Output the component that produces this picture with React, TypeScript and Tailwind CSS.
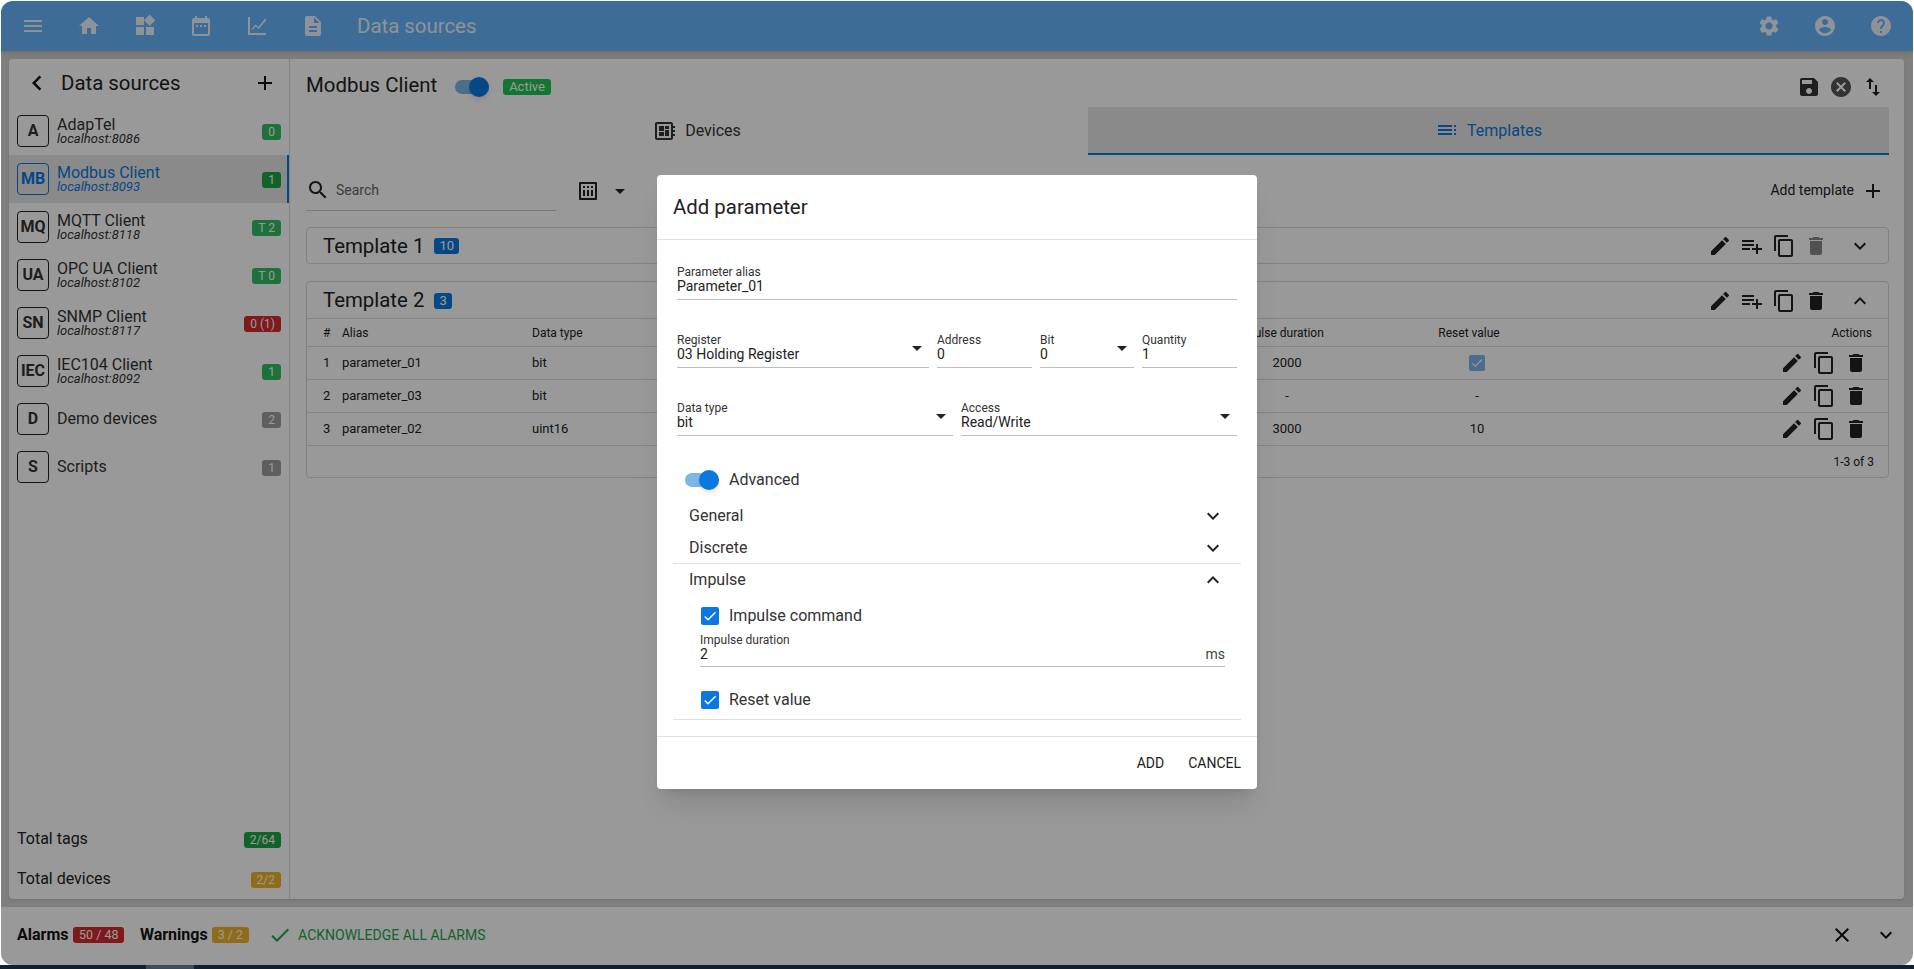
import React from "react";

const P: Record<string, string> = {
  menu: "M3 18h18v-2H3v2zm0-5h18v-2H3v2zm0-7v2h18V6H3z",
  home: "M10 20v-6h4v6h5v-8h3L12 3 2 12h3v8z",
  widgets: "M13 13v8h8v-8h-8zM3 21h8v-8H3v8zM3 3v8h8V3H3zm13.66-2.34L11 6.34 16.66 12l5.66-5.66-5.66-5.66z",
  date: "M9 11H7v2h2v-2zm4 0h-2v2h2v-2zm4 0h-2v2h2v-2zm2-7h-1V2h-2v2H8V2H6v2H5c-1.11 0-1.99.9-1.99 2L3 20c0 1.1.89 2 2 2h14c1.1 0 2-.9 2-2V6c0-1.1-.9-2-2-2zm0 16H5V9h14v11z",
  chart: "M3 3h2v16h16v2H3V3zm3.4 12.6 4.1-5.2 3 2.7L20 4.4l1.5 1.3-7.8 9.2-3-2.7-2.8 3.6-1.5-.2z",
  doc: "M14 2H6c-1.1 0-1.99.9-1.99 2L4 20c0 1.1.89 2 2 2h12c1.1 0 2-.9 2-2V8l-6-6zm2 16H8v-2h8v2zm0-4H8v-2h8v2zm-3-5V3.5L18.5 9H13z",
  settings:
    "M19.14 12.94c.04-.3.06-.61.06-.94 0-.32-.02-.64-.07-.94l2.03-1.58c.18-.14.23-.41.12-.61l-1.92-3.32c-.12-.22-.37-.29-.59-.22l-2.39.96c-.5-.38-1.03-.7-1.62-.94L14.4 2.81c-.04-.24-.24-.41-.48-.41h-3.84c-.24 0-.43.17-.47.41L9.25 5.35c-.59.24-1.13.57-1.62.94l-2.39-.96c-.22-.08-.47 0-.59.22L2.74 8.87c-.12.21-.08.47.12.61l2.03 1.58c-.05.3-.09.63-.09.94s.02.64.07.94l-2.03 1.58c-.18.14-.23.41-.12.61l1.92 3.32c.12.22.37.29.59.22l2.39-.96c.5.38 1.03.7 1.62.94l.36 2.54c.05.24.24.41.48.41h3.84c.24 0 .44-.17.47-.41l.36-2.54c.59-.24 1.13-.56 1.62-.94l2.39.96c.22.08.47 0 .59-.22l1.92-3.32c.12-.22.07-.47-.12-.61l-2.01-1.58zM12 15.6c-1.98 0-3.6-1.62-3.6-3.6s1.62-3.6 3.6-3.6 3.6 1.62 3.6 3.6-1.62 3.6-3.6 3.6z",
  account:
    "M12 2C6.48 2 2 6.48 2 12s4.48 10 10 10 10-4.48 10-10S17.52 2 12 2zm0 3c1.66 0 3 1.34 3 3s-1.34 3-3 3-3-1.34-3-3 1.34-3 3-3zm0 14.2c-2.5 0-4.71-1.28-6-3.22.03-1.99 4-3.08 6-3.08 1.99 0 5.97 1.09 6 3.08-1.29 1.94-3.5 3.22-6 3.22z",
  help: "M12 2C6.48 2 2 6.48 2 12s4.48 10 10 10 10-4.48 10-10S17.52 2 12 2zm1 17h-2v-2h2v2zm2.07-7.75l-.9.92C13.45 12.9 13 13.5 13 15h-2v-.5c0-1.1.45-2.1 1.17-2.83l1.24-1.26c.37-.36.59-.86.59-1.41 0-1.1-.9-2-2-2s-2 .9-2 2H8c0-2.21 1.79-4 4-4s4 1.79 4 4c0 .88-.36 1.68-.93 2.25z",
  left: "M15.41 7.41L14 6l-6 6 6 6 1.41-1.41L10.83 12z",
  add: "M19 13h-6v6h-2v-6H5v-2h6V5h2v6h6v2z",
  save: "M17 3H5c-1.11 0-2 .9-2 2v14c0 1.1.89 2 2 2h14c1.1 0 2-.9 2-2V7l-4-4zm-5 16c-1.66 0-3-1.34-3-3s1.34-3 3-3 3 1.34 3 3-1.34 3-3 3zm3-10H5V5h10v4z",
  cancel:
    "M12 2C6.47 2 2 6.47 2 12s4.47 10 10 10 10-4.47 10-10S17.53 2 12 2zm5 13.59L15.59 17 12 13.41 8.41 17 7 15.59 10.59 12 7 8.41 8.41 7 12 10.59 15.59 7 17 8.41 13.41 12 17 15.59z",
  swap: "M16 17.01V10h-2v7.01h-3L15 21l4-3.99h-3zM9 3L5 6.99h3V14h2V6.99h3L9 3z",
  search:
    "M15.5 14h-.79l-.28-.27C15.41 12.59 16 11.11 16 9.5 16 5.91 13.09 3 9.5 3S3 5.91 3 9.5 5.91 16 9.5 16c1.61 0 3.09-.59 4.23-1.57l.27.28v.79l5 4.99L20.49 19l-4.99-5zm-6 0C7.01 14 5 11.99 5 9.5S7.01 5 9.5 5 14 7.01 14 9.5 11.99 14 9.5 14z",
  edit: "M3 17.25V21h3.75L17.81 9.94l-3.75-3.75L3 17.25zM20.71 7.04c.39-.39.39-1.02 0-1.41l-2.34-2.34c-.39-.39-1.02-.39-1.41 0l-1.83 1.83 3.75 3.75 1.83-1.83z",
  playlist: "M14 10H2v2h12v-2zm0-4H2v2h12V6zm4 8v-4h-2v4h-4v2h4v4h2v-4h4v-2h-4zM2 16h8v-2H2v2z",
  copy: "M16 1H4c-1.1 0-2 .9-2 2v14h2V3h12V1zm3 4H8c-1.1 0-2 .9-2 2v14c0 1.1.9 2 2 2h11c1.1 0 2-.9 2-2V7c0-1.1-.9-2-2-2zm0 16H8V7h11v14z",
  del: "M6 19c0 1.1.9 2 2 2h8c1.1 0 2-.9 2-2V7H6v12zM19 4h-3.5l-1-1h-5l-1 1H5v2h14V4z",
  more: "M16.59 8.59L12 13.17 7.41 8.59 6 10l6 6 6-6z",
  less: "M12 8l-6 6 1.41 1.41L12 10.83l4.59 4.58L18 14z",
  close: "M19 6.41L17.59 5 12 10.59 6.41 5 5 6.41 10.59 12 5 17.59 6.41 19 12 13.41 17.59 19 19 17.59 13.41 12z",
  check: "M9 16.17L4.83 12l-1.42 1.41L9 19 21 7l-1.41-1.41z",
  drop: "M7 10l5 5 5-5z",
  board:
    "M22 9V7h-2V5c0-1.1-.9-2-2-2H4c-1.1 0-2 .9-2 2v14c0 1.1.9 2 2 2h14c1.1 0 2-.9 2-2v-2h2v-2h-2v-2h2v-2h-2V9h2zm-4 10H4V5h14v14zM6 13h5v4H6zm6-6h4v3h-4zM6 7h5v5H6zm6 4h4v6h-4z",
  toc: "M3 9h14V7H3v2zm0 4h14v-2H3v2zm0 4h14v-2H3v2zm16 0h2v-2h-2v2zm0-10v2h2V7h-2zm0 6h2v-2h-2v2z",
  month: "M4 3h16a1 1 0 0 1 1 1v16a1 1 0 0 1-1 1H4a1 1 0 0 1-1-1V4a1 1 0 0 1 1-1zm1 2v14h14V5H5zm2 2h2v2H7V7zm4 0h2v2h-2V7zm4 0h2v2h-2V7zm-8 4h2v6H7v-6zm4 0h2v6h-2v-6zm4 0h2v6h-2v-6z",
};

const Icon = ({ name, className = "w-6 h-6" }: { name: string; className?: string }) => (
  <svg viewBox="0 0 24 24" fill="currentColor" className={`${className} shrink-0`}>
    <path d={P[name]} />
  </svg>
);

type Source = { tag: string; name: string; host?: string; badge: string; color: string; active?: boolean };

const sources: Source[] = [
  { tag: "A", name: "AdapTel", host: "localhost:8086", badge: "0", color: "bg-[#33bd63]" },
  { tag: "MB", name: "Modbus Client", host: "localhost:8093", badge: "1", color: "bg-[#1ea545]", active: true },
  { tag: "MQ", name: "MQTT Client", host: "localhost:8118", badge: "T 2", color: "bg-[#33bd63]" },
  { tag: "UA", name: "OPC UA Client", host: "localhost:8102", badge: "T 0", color: "bg-[#33bd63]" },
  { tag: "SN", name: "SNMP Client", host: "localhost:8117", badge: "0 (1)", color: "bg-[#d42a2e]" },
  { tag: "IEC", name: "IEC104 Client", host: "localhost:8092", badge: "1", color: "bg-[#33bd63]" },
  { tag: "D", name: "Demo devices", badge: "2", color: "bg-[#9e9e9e]" },
  { tag: "S", name: "Scripts", badge: "1", color: "bg-[#9e9e9e]" },
];

const Badge = ({ text, color }: { text: string; color: string }) => (
  <span className={`${color} mt-[2px] h-4 px-[6px] rounded-[3px] text-white text-[12px] leading-4 whitespace-nowrap`}>{text}</span>
);

const SourceRow = ({ s }: { s: Source }) => (
  <div
    className={`h-12 pl-2 pr-2 flex items-center ${
      s.active ? "bg-[#e6e6e6] border-r-2 border-[#0a78e0] text-[#0a78e0] pr-[6px]" : "text-[#333]"
    }`}
  >
    <div
      className={`w-8 h-8 rounded border flex items-center justify-center font-bold text-[16px] ${
        s.active ? "border-[#0a78e0]" : "border-[#222]"
      }`}
    >
      {s.tag}
    </div>
    <div className={`ml-2 flex-1 min-w-0 ${s.host ? "" : "mb-[2px]"}`}>
      <div className="text-[16px] leading-[15px]">{s.name}</div>
      {s.host && <div className="text-[13px] leading-[14px] italic">{s.host}</div>}
    </div>
    <Badge text={s.badge} color={s.color} />
  </div>
);

const Sidebar = () => (
  <div className="w-[281px] shrink-0 flex flex-col border-r border-[#dcdcdc]">
    <div className="h-12 flex items-center pl-[13px] pr-3 text-[#111]">
      <Icon name="left" className="w-[30px] h-[30px]" />
      <span className="ml-[9px] text-[20.4px] text-[#222]">Data sources</span>
      <Icon name="add" className="w-6 h-6 ml-auto" />
    </div>
    {sources.map(s => (
      <SourceRow key={s.tag} s={s} />
    ))}
    <div className="mt-auto px-2 text-[#222] text-[16px]">
      <div className="h-10 flex items-center justify-between">
        <span>Total tags</span>
        <Badge text="2/64" color="bg-[#1ea545]" />
      </div>
      <div className="h-10 flex items-center justify-between">
        <span>Total devices</span>
        <Badge text="2/2" color="bg-[#f0b429]" />
      </div>
    </div>
  </div>
);

const HeadIcons = ({ dim }: { dim?: boolean }) => (
  <div className="flex items-center text-[#222]">
    <Icon name="edit" className="w-6 h-6" />
    <Icon name="playlist" className="w-6 h-6 ml-[8px]" />
    <Icon name="copy" className="w-6 h-6 ml-[8px]" />
    <Icon name="del" className={`w-6 h-6 ml-[8px] ${dim ? "text-[#888]" : ""}`} />
  </div>
);

const rows = [
  { n: 1, alias: "parameter_01", type: "bit", dur: "2000", reset: "check" },
  { n: 2, alias: "parameter_03", type: "bit", dur: "-", reset: "-" },
  { n: 3, alias: "parameter_02", type: "uint16", dur: "3000", reset: "10" },
];

const TemplateCard = ({ title, count, open }: { title: string; count: string; open?: boolean }) => (
  <div className="border border-[#d8d8d8] rounded">
    <div className={`${open ? "h-[36px]" : "h-[35px]"} pt-[1px] flex items-center pl-4 pr-4`}>
      <span className="text-[20.4px] text-[#222]">{title}</span>
      <span className="ml-[10px] h-4 px-[5px] rounded-[3px] bg-[#0a78e0] text-white text-[13px] leading-4">{count}</span>
      <span className="ml-auto mr-[20px]">
        <HeadIcons dim={!open} />
      </span>
      <Icon name={open ? "less" : "more"} className="w-6 h-6 text-[#222]" />
    </div>
    {open && (
      <div className="text-[13px] text-[#222]">
        <div className="h-[29px] flex items-center border-y border-[#dcdcdc] pl-4 pr-4 text-[12px] whitespace-nowrap">
          <span className="w-[19px]">#</span>
          <span className="w-[190px]">Alias</span>
          <span className="w-[686px]">Data type</span>
          <span className="w-[120px] ml-[1px] text-center">Impulse duration</span>
          <span className="w-[120px] ml-[70px] text-center">Reset value</span>
          <span className="ml-auto">Actions</span>
        </div>
        {rows.map(r => (
          <div key={r.n} className="h-[33px] flex items-center border-b border-[#dcdcdc] pl-4 pr-4">
            <span className="w-[19px]">{r.n}</span>
            <span className="w-[190px]">{r.alias}</span>
            <span className="w-[686px]">{r.type}</span>
            <span className="w-[100px] ml-[19px] text-center">{r.dur}</span>
            <span className="w-[100px] ml-[90px] flex justify-center">
              {r.reset === "check" ? (
                <span className="w-4 h-4 rounded-[2px] bg-[#7fb5e8] text-white flex items-center justify-center">
                  <Icon name="check" className="w-[14px] h-[14px]" />
                </span>
              ) : (
                r.reset
              )}
            </span>
            <span className="ml-auto flex items-center mr-[4px]">
              <Icon name="edit" className="w-6 h-6" />
              <Icon name="copy" className="w-6 h-6 ml-[8px]" />
              <Icon name="del" className="w-6 h-6 ml-[8px]" />
            </span>
          </div>
        ))}
        <div className="h-[31px] flex items-center justify-end pr-[14px] text-[12px]">1-3 of 3</div>
      </div>
    )}
  </div>
);

const Main = () => (
  <div className="flex-1 min-w-0 flex flex-col pl-4 pr-[15px]">
    <div className="h-12 pt-2 flex items-center text-[#222]">
      <span className="text-[20.4px] mb-[4px]">Modbus Client</span>
      <span className="relative ml-[18px] w-[34px] h-[14px] rounded-full bg-[#7fb5e8]">
        <span className="absolute right-0 -top-[3px] w-5 h-5 rounded-full bg-[#0a78e0] shadow-md" />
      </span>
      <span className="ml-[14px] h-4 px-[6px] rounded-[3px] bg-[#1fc552] text-white text-[13px] leading-4">Active</span>
      <span className="ml-auto flex items-center mr-[4px]">
        <Icon name="save" className="w-6 h-6 text-[#333]" />
        <Icon name="cancel" className="w-6 h-6 ml-[8px] text-[#555]" />
        <Icon name="swap" className="w-6 h-6 ml-[8px]" />
      </span>
    </div>
    <div className="h-12 flex">
      <div className="flex-1 flex items-center justify-center text-[#333] text-[16px]">
        <Icon name="board" className="w-6 h-6" />
        <span className="ml-2">Devices</span>
      </div>
      <div className="w-[801px] flex items-center justify-center bg-[#e6e6e6] border-b-2 border-[#0a78e0] text-[#0a78e0] text-[16px]">
        <Icon name="toc" className="w-6 h-6" />
        <span className="ml-2 mt-[1px]">Templates</span>
      </div>
    </div>
    <div className="h-[72px] pb-[1px] flex items-center">
      <div className="w-[250px] h-[40px] flex items-center border-b border-[#c8c8c8] text-[#222]">
        <Icon name="search" className="w-6 h-6" />
        <span className="ml-[6px] text-[14px] text-[#666]">Search</span>
      </div>
      <Icon name="month" className="w-6 h-6 ml-[20px] text-[#222]" />
      <Icon name="drop" className="w-6 h-6 ml-[8px] text-[#222]" />
      <span className="ml-auto text-[14px] text-[#222]">Add template</span>
      <Icon name="add" className="w-6 h-6 ml-[7px] mr-[4px] text-[#222]" />
    </div>
    <div className="flex flex-col gap-[17px]">
      <TemplateCard title="Template 1" count="10" />
      <TemplateCard title="Template 2" count="3" open />
    </div>
  </div>
);

const Field = ({ label, value, arrow, className = "" }: { label: string; value: string; arrow?: boolean; className?: string }) => (
  <div className={`relative h-[36px] border-b border-[#bdbdbd] ${className}`}>
    <div className="pt-[1px] text-[12px] leading-[14px] text-[#333]">{label}</div>
    <div className="text-[14px] leading-[14px] text-[#222]">{value}</div>
    {arrow && <Icon name="drop" className="absolute right-0 top-[4px] w-6 h-6 text-[#222]" />}
  </div>
);

const Section = ({ title, open }: { title: string; open?: boolean }) => (
  <div className="h-8 flex items-center pl-4 pr-4 text-[16px] text-[#333]">
    <span>{title}</span>
    <Icon name={open ? "less" : "more"} className="w-6 h-6 ml-auto text-[#222]" />
  </div>
);

const Checkbox = ({ label }: { label: string }) => (
  <div className="h-[18px] flex items-center text-[16px] text-[#333] pl-7">
    <span className="w-[18px] h-[18px] rounded-[2px] bg-[#0a78e0] text-white flex items-center justify-center">
      <Icon name="check" className="w-4 h-4" />
    </span>
    <span className="ml-[10px]">{label}</span>
  </div>
);

const Dialog = () => (
  <div className="w-[600px] h-[614px] bg-white rounded shadow-xl flex flex-col mb-[2px]">
    <div className="h-[65px] shrink-0 flex items-center pl-4 border-b border-[#e0e0e0] text-[20.4px] text-[#222]">Add parameter</div>
    <div className="flex-1 px-4">
      <div className="px-1 pt-6">
        <Field label="Parameter alias" value="Parameter_01" />
        <div className="flex gap-2 mt-[32px]">
          <Field label="Register" value="03 Holding Register" arrow className="w-[252px]" />
          <Field label="Address" value="0" className="w-[95px]" />
          <Field label="Bit" value="0" arrow className="w-[94px]" />
          <Field label="Quantity" value="1" className="w-[95px]" />
        </div>
        <div className="flex gap-2 mt-[32px]">
          <Field label="Data type" value="bit" arrow className="w-[276px]" />
          <Field label="Access" value="Read/Write" arrow className="w-[276px]" />
        </div>
      </div>
      <div className="mt-[32px] h-6 flex items-center pl-3 text-[16px] text-[#333]">
        <span className="relative w-[34px] h-[14px] rounded-full bg-[#7fb5e8]">
          <span className="absolute right-0 -top-[3px] w-5 h-5 rounded-full bg-[#0a78e0] shadow-md" />
        </span>
        <span className="ml-[10px]">Advanced</span>
      </div>
      <div className="mt-[8px]">
        <Section title="General" />
        <Section title="Discrete" />
        <div className="-mt-[1px] border-t border-[#e0e0e0]">
          <Section title="Impulse" open />
          <div className="mt-[11px]">
            <Checkbox label="Impulse command" />
            <div className="relative mt-[7px] ml-[27px] mr-4 h-[35px] border-b border-[#bdbdbd]">
              <div className="pt-[1px] text-[12px] leading-[14px] text-[#333]">Impulse duration</div>
              <div className="text-[14px] leading-[14px] text-[#222]">2</div>
              <span className="absolute right-0 top-[15px] text-[14px] leading-[14px] text-[#444]">ms</span>
            </div>
            <div className="mt-[24px]">
              <Checkbox label="Reset value" />
            </div>
          </div>
        </div>
        <div className="mt-[10px] border-t border-[#e0e0e0]" />
      </div>
    </div>
    <div className="h-[53px] shrink-0 flex items-center justify-end gap-[24px] pr-4 border-t border-[#e0e0e0] text-[14px] text-[#222]">
      <span>ADD</span>
      <span>CANCEL</span>
    </div>
  </div>
);

export default function App() {
  return (
    <div className="w-[1914px] h-[969px] bg-white flex flex-col overflow-hidden font-['Roboto',sans-serif]">
      <div className="relative h-[964px] mt-[1px] mx-[1px] rounded-[12px] overflow-hidden bg-[#d4d4d4] flex flex-col">
        <div className="h-[50px] shrink-0 bg-[#66b6fa] flex items-center pl-[20px] pr-[20px] text-[#eef4fa] shadow-md">
          <Icon name="menu" />
          <Icon name="home" className="w-6 h-6 ml-[32px]" />
          <Icon name="widgets" className="w-6 h-6 ml-[32px]" />
          <Icon name="date" className="w-6 h-6 ml-[32px]" />
          <Icon name="chart" className="w-6 h-6 ml-[32px]" />
          <Icon name="doc" className="w-6 h-6 ml-[32px]" />
          <span className="ml-[32px] text-[20.4px]">Data sources</span>
          <Icon name="settings" className="w-6 h-6 ml-auto" />
          <Icon name="account" className="w-6 h-6 ml-[32px]" />
          <Icon name="help" className="w-6 h-6 ml-[32px]" />
        </div>
        <div className="h-[840px] mt-2 ml-2 mr-[9px] shrink-0 bg-white rounded flex shadow">
          <Sidebar />
          <Main />
        </div>
        <div className="mt-2 flex-1 bg-white flex items-center pl-4 pr-[15px] pb-[2px]">
          <span className="font-bold text-[16px] text-[#111]">Alarms</span>
          <span className="ml-[5px] h-4 px-[5.5px] rounded-[3px] bg-[#d42a2e] text-white text-[12.5px] leading-4">50 / 48</span>
          <span className="ml-[16px] font-bold text-[16px] text-[#111]">Warnings</span>
          <span className="ml-[4px] h-4 px-[6px] rounded-[3px] bg-[#f0b429] text-white text-[12.5px] leading-4">3 / 2</span>
          <Icon name="check" className="w-6 h-6 ml-[19px] text-[#1ea545]" />
          <span className="ml-[6px] text-[14px] text-[#1ea545]">ACKNOWLEDGE ALL ALARMS</span>
          <Icon name="close" className="w-6 h-6 ml-auto text-[#111]" />
          <Icon name="more" className="w-6 h-6 ml-[20px] text-[#111]" />
        </div>
        <div className="absolute inset-0 bg-black/40 flex items-center justify-center">
          <Dialog />
        </div>
      </div>
      <div className="flex-1 bg-[#0d2230] flex">
        <div className="ml-[146px] w-[48px] bg-[#3c4c58]" />
      </div>
    </div>
  );
}
